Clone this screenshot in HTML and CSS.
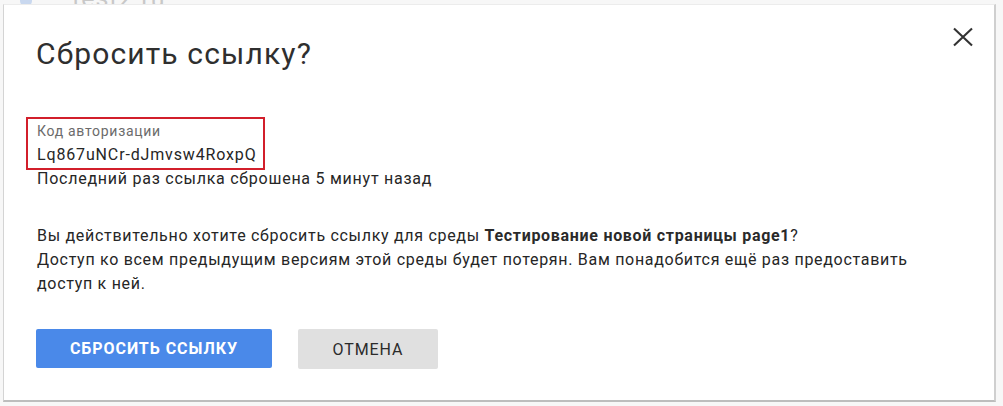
FILE: index.html
```html
<!DOCTYPE html>
<html lang="ru">
<head>
<meta charset="utf-8">
<title>Сбросить ссылку?</title>
<link rel="stylesheet" href="styles.css">
</head>
<body>
<div class="backdrop">
  <span class="backdrop-dot"></span>
  <span class="backdrop-title">test2.ru</span>
</div>
<div class="dialog">
  <div class="dialog-header">
    <h1 class="dialog-title">Сбросить ссылку?</h1>
    <button class="close-btn" aria-label="Закрыть">
      <svg width="20" height="20" viewBox="0 0 20 20"><path d="M1 1.5L19 18.5M19 1.5L1 18.5" stroke="#333" stroke-width="2.1" fill="none"/></svg>
    </button>
  </div>
  <div class="info">
    <div class="code-box">
      <div class="code-label">Код авторизации</div>
      <div class="code-value">Lq867uNCr-dJmvsw4RoxpQ</div>
    </div>
    <div class="info-line">Последний раз ссылка сброшена 5 минут назад</div>
  </div>
  <p class="message">Вы действительно хотите сбросить ссылку для среды <b>Тестирование новой страницы page1</b>?<br>Доступ ко всем предыдущим версиям этой среды будет потерян. Вам понадобится ещё раз предоставить доступ к ней.</p>
  <div class="actions">
    <button class="btn btn-primary">Сбросить ссылку</button>
    <button class="btn btn-secondary">Отмена</button>
  </div>
</div>
</body>
</html>
```
FILE: styles.css
```css
html, body {
  margin: 0;
  padding: 0;
}
body {
  background: #f7f7f7;
  font-family: Roboto, "Liberation Sans", Arial, sans-serif;
  color: #333;
  width: 1003px;
  height: 406px;
  overflow: hidden;
  position: relative;
  padding-top: 4px;
  box-sizing: border-box;
}
.backdrop {
  position: absolute;
  left: 20px;
  top: -16px;
  display: flex;
  align-items: center;
  gap: 40px;
}
.backdrop-dot {
  width: 12px;
  height: 12px;
  border-radius: 50%;
  background: #c9d8ef;
  margin-top: 4px;
}
.backdrop-title {
  font-size: 25px;
  color: #c8c8c8;
  line-height: 30px;
  letter-spacing: 1px;
}
.dialog {
  position: relative;
  margin-left: 3px;
  width: 993px;
  height: 398px;
  box-sizing: border-box;
  background: #fff;
  border-top: 1px solid #ececec;
  border-left: 1px solid #d4d4d4;
  border-right: 2px solid #cfcfcf;
  border-bottom: 2px solid #bdbdbd;
  padding: 23px 22px 0 33px;
}
.dialog-header {
  display: flex;
  justify-content: space-between;
  align-items: flex-start;
}
.dialog-title {
  margin: 8px 0 0 -1px;
  font-size: 30px;
  line-height: 36px;
  font-weight: 400;
  color: #2f2f2f;
  letter-spacing: 1.15px;
}
.close-btn {
  border: none;
  background: none;
  padding: 0;
  margin: -1px -1px 0 0;
  width: 20px;
  height: 20px;
  display: block;
}
.close-btn svg {
  display: block;
}
.info {
  margin-top: 48px;
}
.code-box {
  width: fit-content;
  margin: -1px 0 -1px -9px;
  padding: 1px 6px 1px 9px;
  outline: 2px solid #d21f2b;
}
.code-label {
  font-size: 14px;
  line-height: 23px;
  color: #6b6b6b;
  letter-spacing: 0.7px;
}
.code-value {
  font-size: 16px;
  line-height: 24px;
  color: #262626;
  letter-spacing: 0.85px;
}
.info-line {
  font-size: 16px;
  line-height: 24px;
  color: #262626;
  letter-spacing: 0.75px;
}
.message {
  margin: 33px 11px 0 0;
  font-size: 16px;
  line-height: 24px;
  color: #262626;
  letter-spacing: 0.7px;
}
.message b {
  font-weight: 700;
  color: #2a2a2a;
}
.actions {
  display: flex;
  gap: 26px;
  margin-top: 33px;
  margin-left: -1px;
}
.btn {
  height: 39px;
  border: none;
  border-radius: 2px;
  font-family: Roboto, "Liberation Sans", Arial, sans-serif;
  font-size: 16px;
  text-transform: uppercase;
  padding: 0 34px;
  cursor: pointer;
}
.btn-primary {
  background: #4a89e9;
  color: #fff;
  font-weight: 700;
  letter-spacing: 0.95px;
  width: 236px;
  padding: 0;
}
.btn-secondary {
  background: #e0e0e0;
  color: #2b2b2b;
  font-weight: 400;
  letter-spacing: 0.9px;
  height: 40px;
  width: 140px;
  padding: 0;
}
```
